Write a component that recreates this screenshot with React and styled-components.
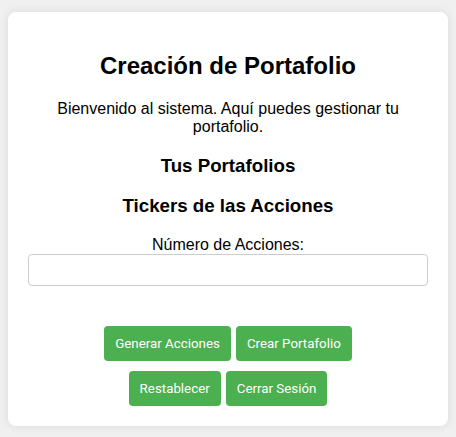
import React from "react";
import styled, { createGlobalStyle } from "styled-components";

const Global = createGlobalStyle`
  html, body { margin: 0; padding: 0; }
  body {
    background: #f0f0f0;
    font-family: "Liberation Sans", Arial, sans-serif;
    padding: 12px 8px;
  }
`;

const Card = styled.div`
  background: #fff;
  border-radius: 8px;
  box-shadow: 0 0 10px rgba(0, 0, 0, 0.1);
  padding: 20px;
  max-width: 400px;
  margin: 0 auto;
  text-align: center;
  color: #000;
`;

const Title = styled.h2`
  font-size: 24px;
  margin: 19.92px 0;
`;

const Intro = styled.p`
  font-size: 16px;
  margin: 16px 0;
`;

const Section = styled.h3`
  font-size: 18.72px;
  margin: 18.72px 0;
`;

const Label = styled.label`
  display: block;
  font-size: 16px;
`;

const Input = styled.input`
  display: block;
  box-sizing: border-box;
  width: 100%;
  height: 32px;
  border: 1px solid #ccc;
  border-radius: 4px;
  padding: 6px 8px;
  font-size: 16px;
  margin: 0;
`;

const Actions = styled.div`
  display: flex;
  flex-direction: column;
  gap: 10px;
  margin-top: 40px;
`;

const ButtonRow = styled.div`
  display: flex;
  justify-content: center;
  gap: 5px;
`;

const Button = styled.button`
  background: #4caf50;
  color: #fff;
  border: none;
  border-radius: 4px;
  padding: 10px 11px;
  height: 35px;
  font-family: Roboto, sans-serif;
  font-size: 13.333px;
  cursor: pointer;
`;

export default function App() {
  return (
    <>
      <Global />
      <Card>
        <Title>Creación de Portafolio</Title>
        <Intro>Bienvenido al sistema. Aquí puedes gestionar tu portafolio.</Intro>
        <Section>Tus Portafolios</Section>
        <Section>Tickers de las Acciones</Section>
        <Label htmlFor="num">Número de Acciones:</Label>
        <Input id="num" type="number" />
        <Actions>
          <ButtonRow>
            <Button>Generar Acciones</Button>
            <Button>Crear Portafolio</Button>
          </ButtonRow>
          <ButtonRow>
            <Button>Restablecer</Button>
            <Button>Cerrar Sesión</Button>
          </ButtonRow>
        </Actions>
      </Card>
    </>
  );
}
